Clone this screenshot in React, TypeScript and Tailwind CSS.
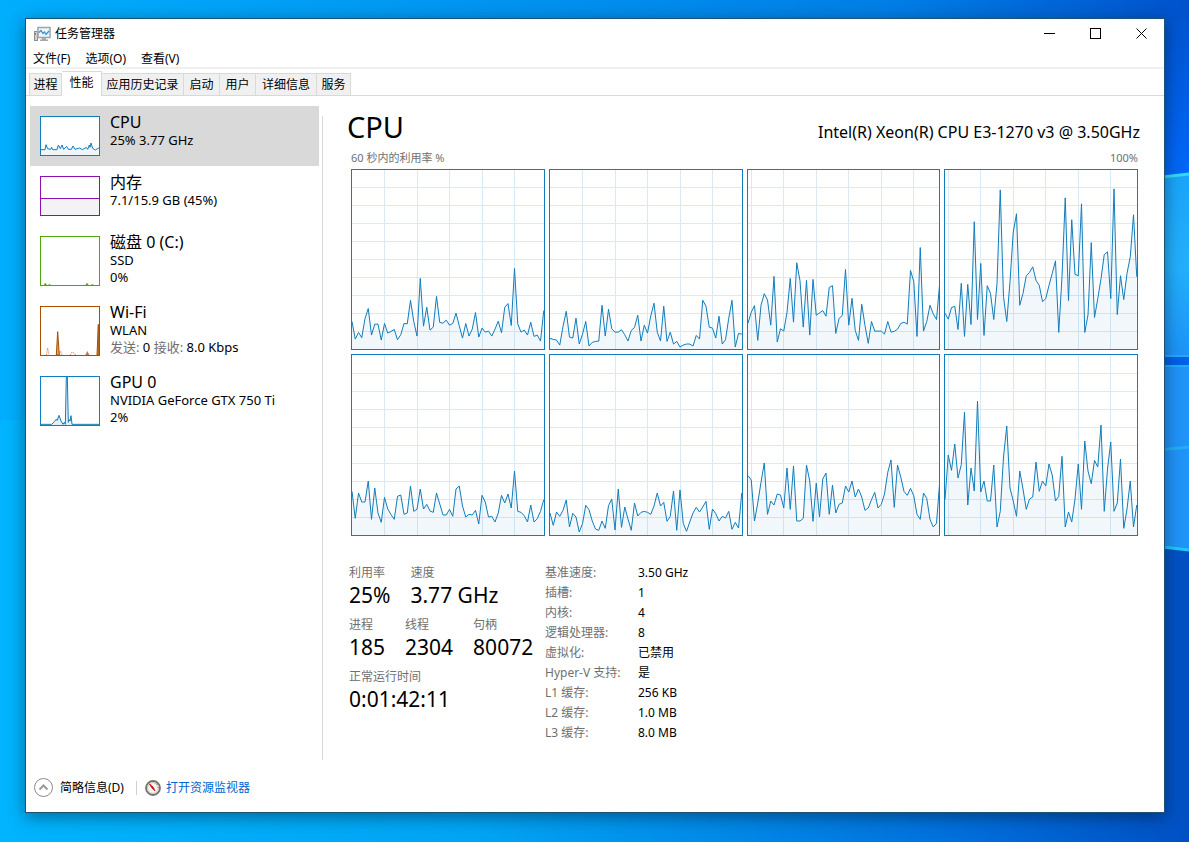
import React, { useState } from 'react';

const STEPS = 59;
const CHART_HEIGHT = 540;

// One list per logical processor, oldest sample first. A value of 540 is 100%.
const cores: number[][] = [
  [83, 30, 50, 34, 92, 122, 42, 75, 75, 27, 77, 48, 53, 59, 28, 43, 77, 76, 147, 83, 39, 213, 69, 126, 57, 66, 159, 80, 78, 87, 72, 77, 108, 70, 33, 77, 39, 60, 110, 36, 63, 51, 54, 39, 60, 84, 49, 126, 137, 71, 243, 76, 51, 57, 42, 81, 38, 42, 24, 116],
  [32, 29, 27, 12, 68, 114, 36, 33, 93, 15, 45, 83, 9, 20, 23, 24, 132, 39, 120, 61, 51, 51, 58, 43, 24, 56, 65, 102, 24, 72, 48, 100, 138, 51, 24, 129, 23, 51, 15, 23, 6, 12, 15, 15, 9, 41, 30, 147, 129, 66, 63, 33, 99, 15, 28, 93, 147, 6, 47, 45],
  [78, 111, 131, 26, 132, 167, 148, 72, 219, 21, 61, 54, 111, 213, 81, 260, 206, 66, 207, 42, 210, 102, 109, 116, 99, 186, 191, 47, 92, 101, 240, 72, 153, 56, 26, 135, 71, 17, 83, 54, 54, 54, 45, 83, 51, 53, 60, 77, 81, 75, 237, 204, 38, 306, 54, 83, 132, 106, 89, 200],
  [108, 90, 125, 129, 59, 198, 38, 195, 74, 384, 89, 258, 41, 191, 168, 89, 198, 480, 158, 83, 203, 353, 408, 132, 168, 221, 231, 248, 207, 192, 143, 152, 192, 228, 266, 50, 218, 456, 146, 390, 225, 221, 438, 50, 103, 321, 95, 152, 212, 285, 293, 152, 483, 104, 221, 149, 228, 278, 405, 218],
  [131, 50, 126, 99, 99, 162, 47, 141, 66, 38, 113, 78, 61, 47, 116, 120, 62, 66, 147, 71, 77, 138, 78, 92, 72, 68, 126, 93, 60, 60, 77, 56, 138, 147, 87, 54, 62, 60, 74, 33, 119, 99, 54, 56, 39, 66, 119, 96, 123, 81, 192, 71, 68, 58, 39, 90, 39, 49, 71, 106],
  [66, 29, 69, 56, 74, 105, 24, 65, 54, 9, 34, 89, 76, 42, 18, 14, 42, 20, 88, 108, 15, 138, 23, 84, 48, 14, 96, 57, 68, 71, 68, 62, 87, 126, 87, 98, 41, 56, 132, 14, 135, 35, 11, 39, 66, 83, 69, 84, 101, 17, 78, 64, 42, 56, 51, 71, 17, 38, 21, 126],
  [178, 165, 42, 96, 158, 216, 62, 102, 90, 123, 120, 81, 201, 77, 207, 42, 42, 50, 210, 162, 41, 156, 54, 168, 186, 62, 150, 66, 92, 96, 147, 129, 162, 114, 138, 114, 74, 81, 106, 128, 81, 92, 123, 188, 225, 83, 210, 174, 131, 119, 140, 118, 62, 47, 126, 110, 47, 24, 35, 161],
  [106, 240, 194, 273, 171, 211, 369, 90, 201, 132, 402, 129, 162, 102, 102, 210, 24, 71, 234, 327, 141, 102, 56, 192, 138, 77, 108, 114, 219, 131, 162, 147, 213, 180, 102, 116, 236, 24, 69, 39, 108, 213, 77, 282, 192, 154, 224, 204, 330, 71, 198, 279, 71, 96, 228, 20, 78, 162, 24, 90],
];

const menus = ['文件(F)', '选项(O)', '查看(V)'];

const tabs = [
  { label: '进程', width: 'w-[33px]' },
  { label: '性能', width: 'w-[40px]' },
  { label: '应用历史记录', width: 'w-[82px]' },
  { label: '启动', width: 'w-[36px]' },
  { label: '用户', width: 'w-[36px]' },
  { label: '详细信息', width: 'w-[61px]' },
  { label: '服务', width: 'w-[34px]' },
];

const details = [
  ['基准速度:', '3.50 GHz'],
  ['插槽:', '1'],
  ['内核:', '4'],
  ['逻辑处理器:', '8'],
  ['虚拟化:', '已禁用'],
  ['Hyper-V 支持:', '是'],
  ['L1 缓存:', '256 KB'],
  ['L2 缓存:', '1.0 MB'],
  ['L3 缓存:', '8.0 MB'],
];

const Wallpaper: React.FC = () => (
  <svg className="absolute inset-0 h-full w-full" viewBox="0 0 1189 842" preserveAspectRatio="none" aria-hidden="true">
    <defs>
      <linearGradient id="sky" x1="0" x2="1" y1="0" y2="0">
        <stop offset="0" stopColor="#00aefd" />
        <stop offset="0.35" stopColor="#0098f2" />
        <stop offset="0.75" stopColor="#007ee6" />
        <stop offset="1" stopColor="#0052cc" />
      </linearGradient>
      <linearGradient id="floor" x1="0" x2="1" y1="0" y2="0">
        <stop offset="0" stopColor="#00b4fe" />
        <stop offset="0.4" stopColor="#00a4f4" />
        <stop offset="0.8" stopColor="#0070dc" />
        <stop offset="1" stopColor="#0050c4" />
      </linearGradient>
      <linearGradient id="beam" x1="0" x2="0" y1="0" y2="1">
        <stop offset="0" stopColor="#0055d0" />
        <stop offset="1" stopColor="#0068fa" />
      </linearGradient>
      <linearGradient id="pane" x1="0" x2="0" y1="0" y2="1">
        <stop offset="0" stopColor="#1aa4fa" />
        <stop offset="0.5" stopColor="#22b0fc" />
        <stop offset="1" stopColor="#1c92f8" />
      </linearGradient>
    </defs>
    <rect width="1189" height="842" fill="url(#sky)" />
    <rect y="420" width="1189" height="422" fill="url(#floor)" />
    <path d="M1100 20H1189V180H1100Z" fill="url(#beam)" />
    <path d="M1100 184L1189 174V357H1100Z" fill="url(#pane)" />
    <path d="M1100 184L1189 174" stroke="#2fdcf4" strokeWidth="3" />
    <path d="M1100 357H1189V366H1100Z" fill="#0060e6" />
    <path d="M1100 366H1189V550L1100 540Z" fill="#1f93f8" />
    <path d="M1100 356H1189M1100 366H1189" stroke="#22aaf8" strokeWidth="2" />
    <path d="M1100 456L1189 447" stroke="#22aef4" strokeWidth="3" />
    <path d="M1100 540L1189 550" stroke="#20c8fa" strokeWidth="3" />
  </svg>
);

const CoreChart: React.FC<{ samples: number[]; offset: number }> = ({ samples, offset }) => {
  const line = samples.map((value, i) => `${i * 10},${CHART_HEIGHT - value}`).join(' ');
  const rows = [54, 108, 162, 216, 270, 324, 378, 432, 486];
  const columns = [0, 100, 200, 300, 400, 500].map((x) => x + offset).filter((x) => x < 590);

  return (
    <div className="min-h-0 border border-[#117dbb] bg-white">
      <svg className="block h-full w-full" viewBox={`0 0 ${STEPS * 10} ${CHART_HEIGHT}`} preserveAspectRatio="none">
        <g stroke="#d9eaf4" shapeRendering="crispEdges">
          {rows.map((y) => (
            <line key={y} x1="0" x2="590" y1={y} y2={y} vectorEffect="non-scaling-stroke" />
          ))}
          {columns.map((x) => (
            <line key={x} x1={x} x2={x} y1="0" y2={CHART_HEIGHT} vectorEffect="non-scaling-stroke" />
          ))}
        </g>
        <polygon points={`0,540 ${line} 590,540`} fill="#117dbb" fillOpacity="0.06" />
        <polyline points={line} fill="none" stroke="#117dbb" vectorEffect="non-scaling-stroke" />
      </svg>
    </div>
  );
};

const CpuThumb = () => (
  <svg className="block h-10 w-15 shrink-0 border border-[#117dbb] bg-white" viewBox="0 0 174 114">
    <path
      d="M-3 98H12L15 83L20 95L29 97L32 91L35 98H48L52 84L58 95L63 84L68 97L77 88L82 97H91L96 87L102 97L116 93L124 98L136 91L140 97L145 84L147 91L150 78L155 94L163 99L169 95L176 92V118H-3Z"
      fill="#eff5f9"
      stroke="#117dbb"
      strokeWidth="3"
    />
  </svg>
);

const MemoryThumb = () => (
  <svg className="block h-10 w-15 shrink-0 border border-[#8b12ae] bg-white" viewBox="0 0 58 38">
    <rect y="21" width="58" height="17" fill="#f4f2f4" />
    <path d="M0 21.5H58" stroke="#8b12ae" />
  </svg>
);

const DiskThumb = () => (
  <svg className="block h-[50px] w-15 shrink-0 border border-[#4da60c] bg-white" viewBox="0 0 174 144">
    <path d="M9 144L13 138L17 144M22 144L25 142L30 144M134 144L138 138L142 144M150 144L154 142L158 144" fill="#4da60c" stroke="#4da60c" strokeWidth="1" />
  </svg>
);

const WifiThumb = () => (
  <svg className="block h-[50px] w-15 shrink-0 border border-[#a74f01] bg-white" viewBox="0 0 174 144">
    <g fill="none" stroke="#d98a62" strokeWidth="3" strokeDasharray="4 3">
      <path d="M16 144L20 123L24 144M54 144L59 132L63 144M88 144L93 135L99 138L104 144" />
    </g>
    <path d="M46 144L50 74L55 144Z" fill="#d7a47a" stroke="#a74f01" strokeWidth="3" />
    <path d="M133 144L139 132L145 144Z" fill="#c0754a" />
    <path d="M168 144L172 52V144Z" fill="#c88a58" stroke="#a74f01" strokeWidth="3" />
  </svg>
);

const GpuThumb = () => (
  <svg className="block h-[50px] w-15 shrink-0 border border-[#117dbb] bg-white" viewBox="0 0 174 144">
    <path
      d="M-3 142H32L40 134L45 127L49 130L54 115L60 132L66 142L70 136L73 142L76 0L79 0L82 136L85 128L87 132L90 116L93 142H177V147H-3Z"
      fill="#e4f0f7"
      stroke="#117dbb"
      strokeWidth="3"
    />
  </svg>
);

const devices = [
  { name: 'CPU', lines: ['25% 3.77 GHz'], thumb: <CpuThumb /> },
  { name: '内存', lines: ['7.1/15.9 GB (45%)'], thumb: <MemoryThumb /> },
  { name: '磁盘 0 (C:)', lines: ['SSD', '0%'], thumb: <DiskThumb /> },
  {
    name: 'Wi-Fi',
    lines: [
      'WLAN',
      <>
        <span className="text-[#707070]">发送:</span> 0 <span className="text-[#707070]">接收:</span> 8.0 Kbps
      </>,
    ],
    thumb: <WifiThumb />,
  },
  { name: 'GPU 0', lines: ['NVIDIA GeForce GTX 750 Ti', '2%'], thumb: <GpuThumb /> },
];

const Stat: React.FC<{ label: string; value: string }> = ({ label, value }) => (
  <div>
    <dt className="text-xs leading-5 text-[#707070]">{label}</dt>
    <dd className="text-[21px] leading-6">{value}</dd>
  </div>
);

const App: React.FC = () => {
  const [activeTab, setActiveTab] = useState('性能');
  const [activeDevice, setActiveDevice] = useState('CPU');

  return (
    <div className="relative flex min-h-screen bg-[#00a0f4] pt-[18px] pr-6 pb-[29px] pl-[25px] font-['Noto_Sans','Noto_Sans_CJK_SC',sans-serif] text-xs text-black">
      <Wallpaper />
      <div className="relative flex min-w-0 flex-1 flex-col border border-[#1c5375] bg-white shadow-[0_4px_16px_rgba(0,0,0,0.4)]">
        <header className="flex h-[30px] items-center pl-2">
          <svg className="mr-1 h-4 w-[17px]" viewBox="0 0 17 16" aria-hidden="true">
            <rect x="0.5" y="5.5" width="3" height="9" fill="#d2d2d2" stroke="#8e8e8e" />
            <rect x="1" y="7" width="1" height="2" fill="#4caf50" />
            <rect x="4" y="1.5" width="12" height="10" fill="#eef6fb" stroke="#a2a2a2" strokeWidth="1.5" />
            <path d="M5 6.5L7 4.5L9 7.5L10.5 6L12 8.5L15 5" fill="none" stroke="#2b95cf" strokeWidth="1.2" />
            <path d="M8 12H12V13.5H14V15H6V13.5H8Z" fill="#a8a8a8" />
          </svg>
          <h1 className="flex-1 leading-5">任务管理器</h1>
          <div className="flex h-7 self-start">
            <button aria-label="最小化" className="flex w-[46px] items-center justify-center">
              <svg className="h-[11px] w-[11px]" viewBox="0 0 11 11" stroke="#000">
                <path d="M0 5.5H11" />
              </svg>
            </button>
            <button aria-label="最大化" className="flex w-[46px] items-center justify-center">
              <svg className="h-[11px] w-[11px]" viewBox="0 0 11 11" fill="none" stroke="#000">
                <rect x="0.5" y="0.5" width="10" height="10" />
              </svg>
            </button>
            <button aria-label="关闭" className="flex w-[46px] items-center justify-center">
              <svg className="h-[11px] w-[11px]" viewBox="0 0 11 11" stroke="#000">
                <path d="M0.5 0.5L10.5 10.5M10.5 0.5L0.5 10.5" />
              </svg>
            </button>
          </div>
        </header>

        <nav className="flex h-5 items-end gap-[15px] border-b-2 border-[#f0f0f0] pl-[7px]">
          {menus.map((menu) => (
            <button key={menu} className="leading-4">{menu}</button>
          ))}
        </nav>

        <div role="tablist" className="flex h-[27px] items-end border-b border-[#d9d9d9] pl-[3px]">
          {tabs.map((tab) => (
            <button
              key={tab.label}
              role="tab"
              aria-selected={tab.label === activeTab}
              onClick={() => setActiveTab(tab.label)}
              className={
                tab.label === activeTab
                  ? `${tab.width} -mb-px h-[25px] border border-b-0 border-l-0 border-[#d9d9d9] bg-white pb-0.5 leading-5 whitespace-nowrap`
                  : `${tab.width} h-[22px] border-t border-r border-[#d9d9d9] bg-[#f0f0f0] leading-5 whitespace-nowrap first:border-l`
              }
            >
              {tab.label}
            </button>
          ))}
        </div>

        <div className="flex flex-1 pt-[10px]">
          <aside className="w-[296px] shrink-0 pl-1">
            {devices.map((device) => (
              <button
                key={device.name}
                onClick={() => setActiveDevice(device.name)}
                className={
                  device.name === activeDevice
                    ? 'flex w-[289px] gap-[10px] bg-[#d9d9d9] p-[10px] text-left'
                    : 'flex w-[289px] gap-[10px] p-[10px] text-left'
                }
              >
                {device.thumb}
                <span className="-mt-1 -mb-2 flex flex-col">
                  <span className="text-base leading-5">{device.name}</span>
                  {device.lines.map((line, i) => (
                    <span key={i} className="text-[13px] leading-[17px] whitespace-nowrap">{line}</span>
                  ))}
                </span>
              </button>
            ))}
          </aside>

          <main className="mt-[10px] flex-1 border-l border-[#d9d9d9] pr-6 pl-6">
            <div className="flex h-[34px] items-end justify-between pb-1.5">
              <h2 className="text-[29px] leading-[34px]">CPU</h2>
              <p className="text-base leading-6">Intel(R) Xeon(R) CPU E3-1270 v3 @ 3.50GHz</p>
            </div>
            <div className="flex justify-between pr-0.5 pl-1 text-[11px] leading-4 text-[#707070]">
              <span>60 秒内的利用率 %</span>
              <span>100%</span>
            </div>
            <div className="mt-[3px] grid grid-cols-4 grid-rows-[181px_182px] gap-1 pr-0.5 pl-1">
              {cores.map((samples, i) => (
                <CoreChart key={i} samples={samples} offset={i % 4 < 2 ? 100 : 10} />
              ))}
            </div>

            <div className="mt-[27px] flex pl-0.5">
              <dl className="flex w-[196px] shrink-0 flex-col gap-2">
                <div className="flex gap-5">
                  <Stat label="利用率" value="25%" />
                  <Stat label="速度" value="3.77 GHz" />
                </div>
                <div className="flex gap-5">
                  <Stat label="进程" value="185" />
                  <Stat label="线程" value="2304" />
                  <Stat label="句柄" value="80072" />
                </div>
                <Stat label="正常运行时间" value="0:01:42:11" />
              </dl>
              <table className="self-start">
                <tbody>
                  {details.map(([label, value]) => (
                    <tr key={label} className="h-5 leading-5">
                      <th scope="row" className="w-[93px] p-0 text-left font-normal whitespace-nowrap text-[#707070]">{label}</th>
                      <td className="p-0 whitespace-nowrap">{value}</td>
                    </tr>
                  ))}
                </tbody>
              </table>
            </div>
          </main>
        </div>

        <footer className="flex h-[52px] items-center pt-[3px] pl-2">
          <button className="flex items-center gap-[7px] leading-5">
            <svg className="h-[19px] w-[19px]" viewBox="0 0 19 19" fill="none" stroke="#8a8a8a" aria-hidden="true">
              <circle cx="9.5" cy="9.5" r="9" />
              <path d="M5.5 11.5L9.5 7.5L13.5 11.5" stroke="#9a9a9a" strokeWidth="2" />
            </svg>
            简略信息(D)
          </button>
          <span className="mr-2 ml-3 h-[14px] w-px bg-[#d0d0d0]" />
          <a href="#resource-monitor" className="flex items-center gap-[5px] leading-5 text-[#0066cc]">
            <svg className="h-4 w-4" viewBox="0 0 16 16" aria-hidden="true">
              <circle cx="8" cy="8" r="7" fill="#f4f4ee" stroke="#74746c" strokeWidth="1.8" />
              <circle cx="8" cy="8" r="5.5" fill="none" stroke="#c4c4bc" />
              <path d="M4.5 4L8 7L10 11L7 8Z" fill="#d01818" stroke="#d01818" strokeLinejoin="round" />
              <path d="M11 3.5L12.5 5M12.5 7.5H13.5" stroke="#8a8a82" />
            </svg>
            打开资源监视器
          </a>
        </footer>
      </div>
    </div>
  );
};

export default App;
